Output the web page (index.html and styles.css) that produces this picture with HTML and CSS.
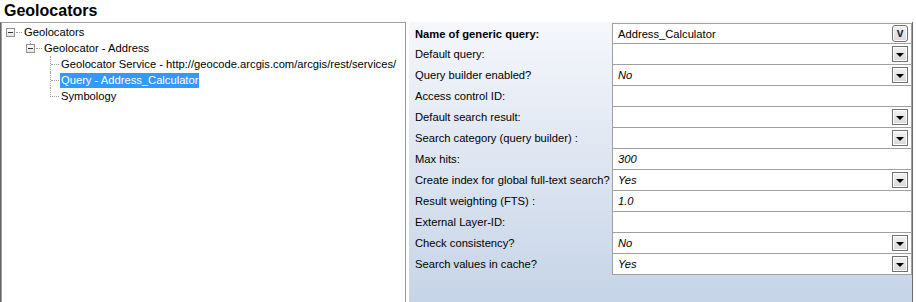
FILE: index.html
```html
<!DOCTYPE html>
<html lang="en">

<head>
    <meta charset="UTF-8">
    <title>Geolocators</title>
    <link rel="stylesheet" href="styles.css">
</head>

<body>

    <div class="title">Geolocators</div>

    <div class="main">
        <!-- tree on the left -->
        <div class="tree">
            <div class="node lvl0">
                <span class="box"></span><span class="link"></span>
                <span class="label">Geolocators</span>
            </div>
            <div class="node lvl1">
                <span class="box up"></span><span class="link"></span>
                <span class="label">Geolocator - Address</span>
            </div>
            <div class="leaves">
                <div class="node leaf">
                    <span class="elbow"></span>
                    <span class="label">Geolocator Service - http://geocode.arcgis.com/arcgis/rest/services/</span>
                </div>
                <div class="node leaf">
                    <span class="elbow"></span>
                    <span class="label selected">Query - Address_Calculator</span>
                </div>
                <div class="node leaf last">
                    <span class="elbow"></span>
                    <span class="label">Symbology</span>
                </div>
            </div>
        </div>

        <!-- property grid -->
        <div class="props">
            <div class="name bold">Name of generic query:</div>
            <div class="value first"><span class="text">Address_Calculator</span><span class="btn v">v</span></div>

            <div class="name">Default query:</div>
            <div class="value"><span class="text"></span><span class="btn drop"></span></div>

            <div class="name">Query builder enabled?</div>
            <div class="value"><span class="text it">No</span><span class="btn drop"></span></div>

            <div class="name">Access control ID:</div>
            <div class="value"><span class="text"></span></div>

            <div class="name">Default search result:</div>
            <div class="value"><span class="text"></span><span class="btn drop"></span></div>

            <div class="name">Search category (query builder) :</div>
            <div class="value"><span class="text"></span><span class="btn drop"></span></div>

            <div class="name">Max hits:</div>
            <div class="value"><span class="text it">300</span></div>

            <div class="name">Create index for global full-text search?</div>
            <div class="value"><span class="text it">Yes</span><span class="btn drop"></span></div>

            <div class="name">Result weighting (FTS) :</div>
            <div class="value"><span class="text it">1.0</span></div>

            <div class="name">External Layer-ID:</div>
            <div class="value"><span class="text"></span></div>

            <div class="name">Check consistency?</div>
            <div class="value"><span class="text it">No</span><span class="btn drop"></span></div>

            <div class="name">Search values in cache?</div>
            <div class="value"><span class="text it">Yes</span><span class="btn drop"></span></div>
        </div>
    </div>

</body>

</html>
```

FILE: styles.css
```css
body {
    margin: 0;
    width: 916px;
    height: 302px;
    overflow: hidden;
    background-color: #fff;
    font-family: "Liberation Sans", Arial, sans-serif;
    font-size: 11.2px;
    color: #000;
}

.title {
    height: 22px;
    line-height: 21px;
    padding-left: 4px;
    font-size: 16px;
    font-weight: bold;
    box-sizing: border-box;
}

.main {
    display: flex;
    height: 280px;
}

/* tree */
.tree {
    width: 406px;
    box-sizing: border-box;
    border-top: 1px solid #a0a0a0;
    border-left: 1px solid #646464;
    border-right: 1px solid #9a9a9a;
    box-shadow: inset 1px 0 #a0a0a0;
    padding-top: 1px;
    overflow: hidden;
}

.node {
    display: flex;
    align-items: center;
    height: 16px;
    white-space: nowrap;
}

.lvl0 {
    padding-left: 5px;
}

.lvl1 {
    padding-left: 25px;
}

.box {
    position: relative;
    flex: none;
    width: 7px;
    height: 7px;
    border: 1px solid #919191;
    background: linear-gradient(#fff, #e6e6e6);
}

.box::after {
    content: "";
    position: absolute;
    left: 1px;
    top: 3px;
    width: 5px;
    height: 1px;
    background-color: #333;
}

.box.up::before {
    content: "";
    position: absolute;
    left: 3px;
    top: -4px;
    height: 3px;
    border-left: 1px dotted #a0a0a0;
}

.link {
    flex: none;
    width: 6px;
    border-top: 1px dotted #a0a0a0;
    margin-left: 1px;
}

.label {
    margin-left: 1px;
    padding: 0 1px 1px 1px;
    line-height: 14px;
}

.leaves {
    margin-left: 49px;
}

.leaf {
    border-left: 1px dotted #a0a0a0;
}

.leaf.last {
    border-left: none;
}

.elbow {
    flex: none;
    width: 8px;
    border-top: 1px dotted #a0a0a0;
}

.leaf.last .elbow {
    align-self: flex-start;
    height: 8px;
    border-top: none;
    border-left: 1px dotted #a0a0a0;
    border-bottom: 1px dotted #a0a0a0;
}

.selected {
    background-color: #3399ff;
    color: #fff;
}

/* property grid */
.props {
    margin-left: 3px;
    width: 504px;
    box-sizing: border-box;
    padding-top: 1px;
    border-right: 1px solid #6a6a6a;
    background: linear-gradient(#f5f7fb, #c6d4e7);
    display: grid;
    grid-template-columns: 203px 300px;
    grid-auto-rows: 21px;
    align-content: start;
}

.name {
    padding-left: 6px;
    line-height: 21px;
    white-space: nowrap;
    overflow: hidden;
}

.name.bold {
    font-weight: bold;
    line-height: 22px;
}

.value {
    display: flex;
    align-items: center;
    background-color: #fff;
    border: 1px solid #a0a0a0;
    border-top: none;
}

.value.first {
    border-top: 1px solid #a0a0a0;
}

.text {
    flex: 1;
    padding-left: 5px;
}

.it {
    font-style: italic;
}

.btn {
    width: 14px;
    height: 14px;
    margin-right: 3px;
    border: 1px solid #707070;
    box-shadow: inset 0 0 0 1px #fff;
    background: linear-gradient(#f3f3f3, #d8d8d8);
    position: relative;
}

.btn.drop::after {
    content: "";
    position: absolute;
    left: 3px;
    top: 6px;
    border-left: 4px solid transparent;
    border-right: 4px solid transparent;
    border-top: 4px solid #000;
}

.btn.v {
    height: 15px;
    border-radius: 3px;
    text-align: center;
    font-weight: bold;
    font-size: 12px;
    line-height: 14px;
    color: #1c2a5c;
}
```
